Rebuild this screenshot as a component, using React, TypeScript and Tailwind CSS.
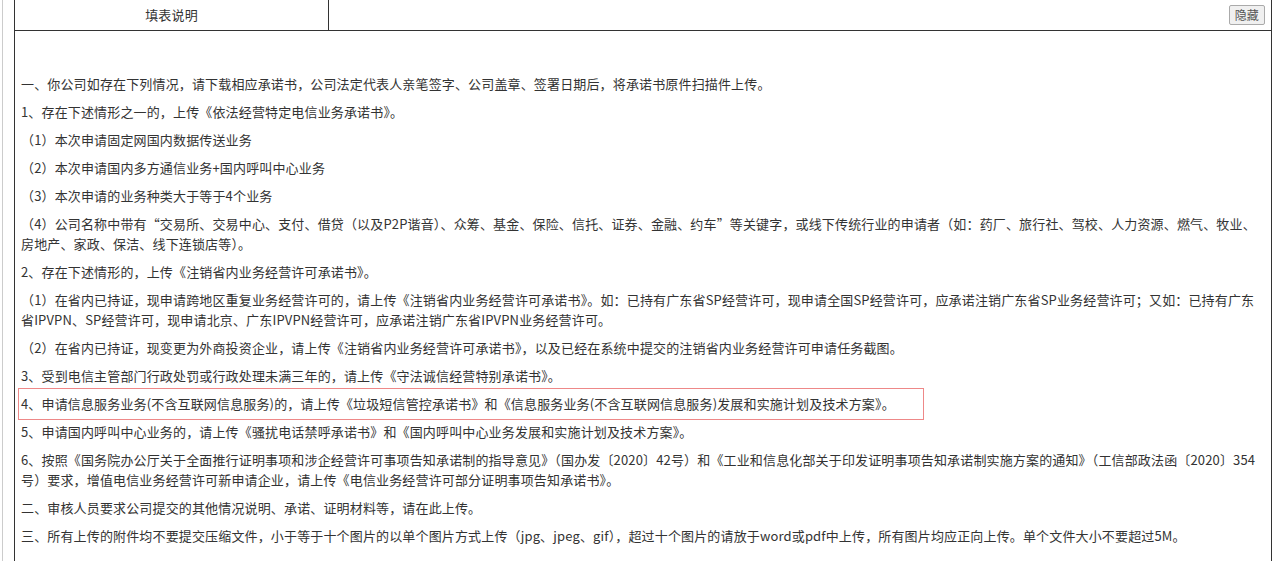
const paras: { t: string; box?: boolean }[] = [
  { t: "一、你公司如存在下列情况，请下载相应承诺书，公司法定代表人亲笔签字、公司盖章、签署日期后，将承诺书原件扫描件上传。" },
  { t: "1、存在下述情形之一的，上传《依法经营特定电信业务承诺书》。" },
  { t: "（1）本次申请固定网国内数据传送业务" },
  { t: "（2）本次申请国内多方通信业务+国内呼叫中心业务" },
  { t: "（3）本次申请的业务种类大于等于4个业务" },
  { t: "（4）公司名称中带有“交易所、交易中心、支付、借贷（以及P2P谐音）、众筹、基金、保险、信托、证券、金融、约车”等关键字，或线下传统行业的申请者（如：药厂、旅行社、驾校、人力资源、燃气、牧业、房地产、家政、保洁、线下连锁店等）。" },
  { t: "2、存在下述情形的，上传《注销省内业务经营许可承诺书》。" },
  { t: "（1）在省内已持证，现申请跨地区重复业务经营许可的，请上传《注销省内业务经营许可承诺书》。如：已持有广东省SP经营许可，现申请全国SP经营许可，应承诺注销广东省SP业务经营许可；又如：已持有广东省IPVPN、SP经营许可，现申请北京、广东IPVPN经营许可，应承诺注销广东省IPVPN业务经营许可。" },
  { t: "（2）在省内已持证，现变更为外商投资企业，请上传《注销省内业务经营许可承诺书》，以及已经在系统中提交的注销省内业务经营许可申请任务截图。" },
  { t: "3、受到电信主管部门行政处罚或行政处理未满三年的，请上传《守法诚信经营特别承诺书》。" },
  { t: "4、申请信息服务业务(不含互联网信息服务)的，请上传《垃圾短信管控承诺书》和《信息服务业务(不含互联网信息服务)发展和实施计划及技术方案》。", box: true },
  { t: "5、申请国内呼叫中心业务的，请上传《骚扰电话禁呼承诺书》和《国内呼叫中心业务发展和实施计划及技术方案》。" },
  { t: "6、按照《国务院办公厅关于全面推行证明事项和涉企经营许可事项告知承诺制的指导意见》（国办发〔2020〕42号）和《工业和信息化部关于印发证明事项告知承诺制实施方案的通知》（工信部政法函〔2020〕354号）要求，增值电信业务经营许可新申请企业，请上传《电信业务经营许可部分证明事项告知承诺书》。" },
  { t: "二、审核人员要求公司提交的其他情况说明、承诺、证明材料等，请在此上传。" },
  { t: "三、所有上传的附件均不要提交压缩文件，小于等于十个图片的以单个图片方式上传（jpg、jpeg、gif），超过十个图片的请放于word或pdf中上传，所有图片均应正向上传。单个文件大小不要超过5M。" },
];

export default function App() {
  return (
    <div
      className="h-[562px] w-[1280px] overflow-hidden bg-white pl-[2px] text-[13px] tracking-[0.15px] text-[#333]"
      style={{ fontFamily: '"Microsoft YaHei", "Noto Sans CJK SC", sans-serif' }}
    >
      <div className="h-full border-l border-[#ccc] pl-[11px]">
        <div className="h-full w-[1258px] border-x border-[#333]">
          <div className="flex h-[32px] border-y border-[#333] -mt-px">
            <div className="flex w-[314px] items-center justify-center border-r border-[#333]">填表说明</div>
            <div className="flex flex-1 items-center justify-end pr-[6px]">
              <button className="h-[20px] rounded-[2px] border border-[#aaa] bg-[#f0f0f0] px-[5px] text-[12px] leading-[18px] text-[#555]">
                隐藏
              </button>
            </div>
          </div>
          <div className="px-[3px] pt-[43px]">
            {paras.map((p, i) => (
              <p
                key={i}
                className={`leading-[20px] ${p.box ? "-mt-[6px] mb-[2px] w-[906px] border border-[#e88] px-[2px] py-[5px]" : "mb-[8px] px-[3px]"}`}
              >
                {p.t}
              </p>
            ))}
          </div>
        </div>
      </div>
    </div>
  );
}
